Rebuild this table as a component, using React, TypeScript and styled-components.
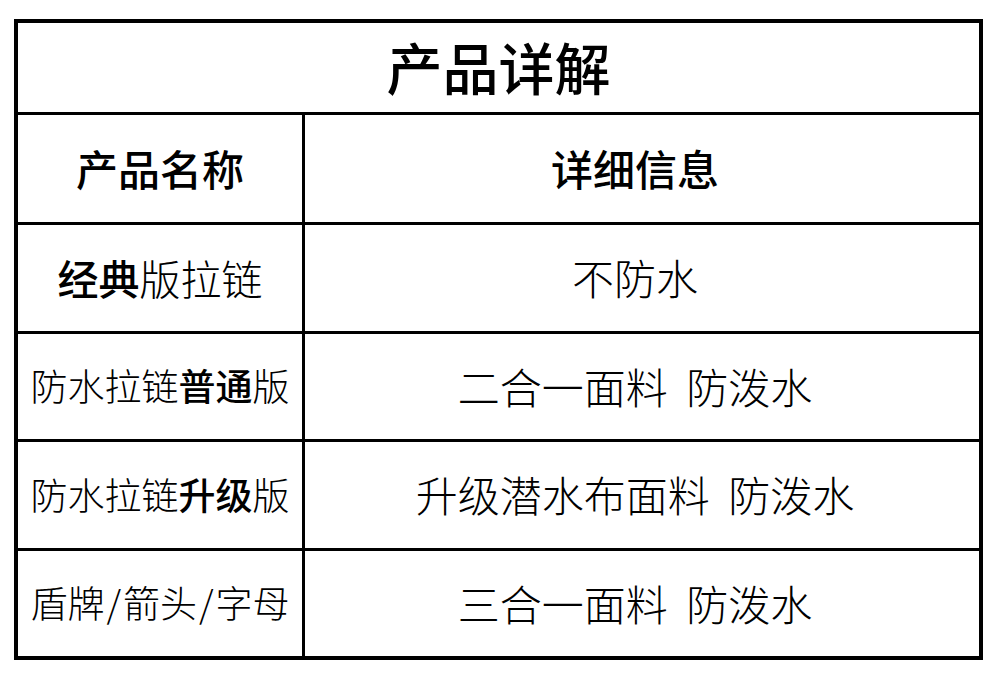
import styled, { createGlobalStyle } from 'styled-components';

const GlobalStyle = createGlobalStyle`
  html, body {
    margin: 0;
    padding: 0;
    background: #fff;
  }
  body {
    font-family: 'Noto Sans CJK SC', 'Noto Sans', sans-serif;
    color: #000;
  }
`;

const Page = styled.main`
  width: 1000px;
  height: 678px;
  padding: 19px 0 0 14px;
  box-sizing: border-box;
`;

const Table = styled.section`
  width: 969px;
  height: 641px;
  box-sizing: border-box;
  border: 4px solid #000;
  display: flex;
  flex-direction: column;
`;

const TitleRow = styled.header`
  height: 89px;
  box-sizing: border-box;
  padding-bottom: 4px;
  display: flex;
  align-items: center;
  justify-content: center;
  font-size: 56px;
  font-weight: 500;
  line-height: 1;
`;

const Row = styled.div<{ $height: number }>`
  height: ${(p) => p.$height}px;
  border-top: 3px solid #000;
  display: grid;
  grid-template-columns: 284px 1fr;
`;

const Cell = styled.div<{ $size: number; $head?: boolean; $right?: boolean }>`
  display: flex;
  align-items: center;
  justify-content: center;
  box-sizing: border-box;
  font-size: ${(p) => p.$size}px;
  font-weight: ${(p) => (p.$head ? 500 : 300)};
  line-height: 1;
  white-space: pre;
  border-left: ${(p) => (p.$right ? '3px solid #000' : 'none')};
  padding: 0 ${(p) => (p.$right ? 14 : 0)}px 2px 0;
`;

const Strong = styled.b`
  font-weight: 500;
`;

const Slash = styled.span`
  margin: 0 2px;
`;

const rows = [
  { height: 106, name: <><Strong>经典</Strong>版拉链</>, nameSize: 41, detail: '不防水' },
  { height: 105, name: <>防水拉链<Strong>普通</Strong>版</>, nameSize: 37, detail: '二合一面料  防泼水' },
  { height: 106, name: <>防水拉链<Strong>升级</Strong>版</>, nameSize: 37, detail: '升级潜水布面料  防泼水' },
  {
    height: 105,
    name: <>盾牌<Slash>/</Slash>箭头<Slash>/</Slash>字母</>,
    nameSize: 37,
    detail: '三合一面料  防泼水',
  },
];

export default function App() {
  return (
    <Page>
      <GlobalStyle />
      <Table>
        <TitleRow>产品详解</TitleRow>
        <Row $height={107}>
          <Cell $size={42} $head>产品名称</Cell>
          <Cell $size={42} $head $right>详细信息</Cell>
        </Row>
        {rows.map((row, i) => (
          <Row key={i} $height={row.height}>
            <Cell $size={row.nameSize}>{row.name}</Cell>
            <Cell $size={42} $right>{row.detail}</Cell>
          </Row>
        ))}
      </Table>
    </Page>
  );
}
